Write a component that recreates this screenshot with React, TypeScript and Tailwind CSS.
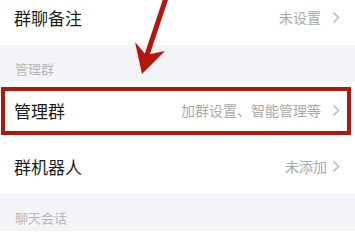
import React from 'react';

const font = { fontFamily: '"Noto Sans CJK SC", "Noto Sans", sans-serif' };

function Chevron() {
  return (
    <svg width="8" height="13" viewBox="0 0 8 13" className="shrink-0">
      <path d="M1.5 1.5 L6.5 6.5 L1.5 11.5" fill="none" stroke="#b4b4b4" strokeWidth="1.4" />
    </svg>
  );
}

function Row({ label, value, gap = 'gap-[11px]', extra = '' }: { label: string; value: string; gap?: string; extra?: string }) {
  return (
    <div className={`h-[56px] bg-white flex items-center justify-between pl-[14px] pr-[15px] ${extra}`}>
      <span className="text-[17px] text-[#1c1c1c] leading-none">{label}</span>
      <div className={`flex items-center ${gap}`}>
        <span className="text-[14px] text-[#a9a9a9] leading-none">{value}</span>
        <Chevron />
      </div>
    </div>
  );
}

function SectionHeader({ title }: { title: string }) {
  return (
    <div className="h-[37px] bg-[#f3f4f8] flex items-end pl-[15px] pb-[5px]">
      <span className="text-[13px] text-[#b7b7b7] leading-[16px]">{title}</span>
    </div>
  );
}

export default function App() {
  return (
    <div className="relative w-[355px] h-[250px] overflow-hidden bg-white" style={font}>
      <div className="-mt-[11px]">
        <Row label="群聊备注" value="未设置" />
        <SectionHeader title="管理群" />
        <Row label="管理群" value="加群设置、智能管理等" />
        <Row label="群机器人" value="未添加" gap="gap-[5px]" />
        <SectionHeader title="聊天会话" />
        <div className="h-[60px] bg-white" />
      </div>

      {/* annotation box */}
      <div className="absolute left-[1px] top-[87px] w-[350px] h-[48px] border-[4px] border-[#b3150f]" />

      {/* annotation arrow */}
      <svg className="absolute left-0 top-0" width="355" height="100" viewBox="0 0 355 100">
        <line x1="166" y1="-2" x2="146" y2="58" stroke="#b3150f" strokeWidth="5" />
        <polygon points="142,74 135,42 146,55 165,51" fill="#b3150f" />
      </svg>
    </div>
  );
}
